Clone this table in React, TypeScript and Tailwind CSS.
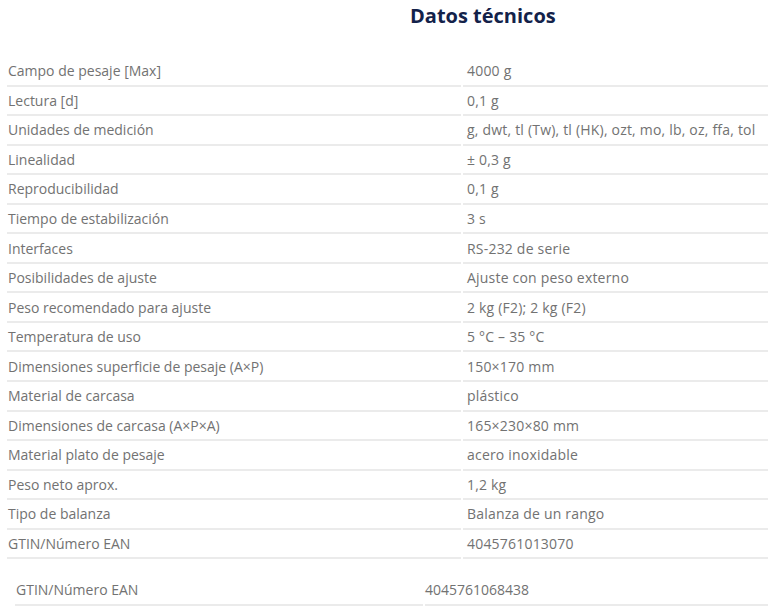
const rows: [string, string][] = [
  ["Campo de pesaje [Max]", "4000 g"],
  ["Lectura [d]", "0,1 g"],
  ["Unidades de medición", "g, dwt, tl (Tw), tl (HK), ozt, mo, lb, oz, ffa, tol"],
  ["Linealidad", "± 0,3 g"],
  ["Reproducibilidad", "0,1 g"],
  ["Tiempo de estabilización", "3 s"],
  ["Interfaces", "RS-232 de serie"],
  ["Posibilidades de ajuste", "Ajuste con peso externo"],
  ["Peso recomendado para ajuste", "2 kg (F2); 2 kg (F2)"],
  ["Temperatura de uso", "5 °C – 35 °C"],
  ["Dimensiones superficie de pesaje (A×P)", "150×170 mm"],
  ["Material de carcasa", "plástico"],
  ["Dimensiones de carcasa (A×P×A)", "165×230×80 mm"],
  ["Material plato de pesaje", "acero inoxidable"],
  ["Peso neto aprox.", "1,2 kg"],
  ["Tipo de balanza", "Balanza de un rango"],
  ["GTIN/Número EAN", "4045761013070"],
];

const App = () => {
  return (
    <main className="w-[768px] h-[609px] overflow-hidden bg-white font-['Open_Sans',sans-serif] text-[14px] text-[#727272]">
      <h2 className="pl-[410px] pt-[1px] h-[57px] text-[20px] font-bold text-[#13224a]">
        Datos técnicos
      </h2>
      <div className="ml-[7px]">
        {rows.map(([label, value]) => (
          <div key={label} className="flex h-[29.56px] gap-[2px]">
            <div className="w-[454px] flex items-center pl-[1px] border-b-2 border-[#ebebeb]">
              {label}
            </div>
            <div className="flex-1 flex items-center pl-[4px] border-b-2 border-[#ebebeb] whitespace-nowrap tracking-[0.2px]">
              {value}
            </div>
          </div>
        ))}
      </div>
      <div className="ml-[15px] mt-[16px] flex h-[31px] gap-[2px]">
        <div className="w-[408px] flex items-center pl-[1px] border-b-2 border-[#ebebeb]">
          GTIN/Número EAN
        </div>
        <div className="flex-1 flex items-center border-b-2 border-[#ebebeb]">
          4045761068438
        </div>
      </div>
    </main>
  );
};

export default App;
